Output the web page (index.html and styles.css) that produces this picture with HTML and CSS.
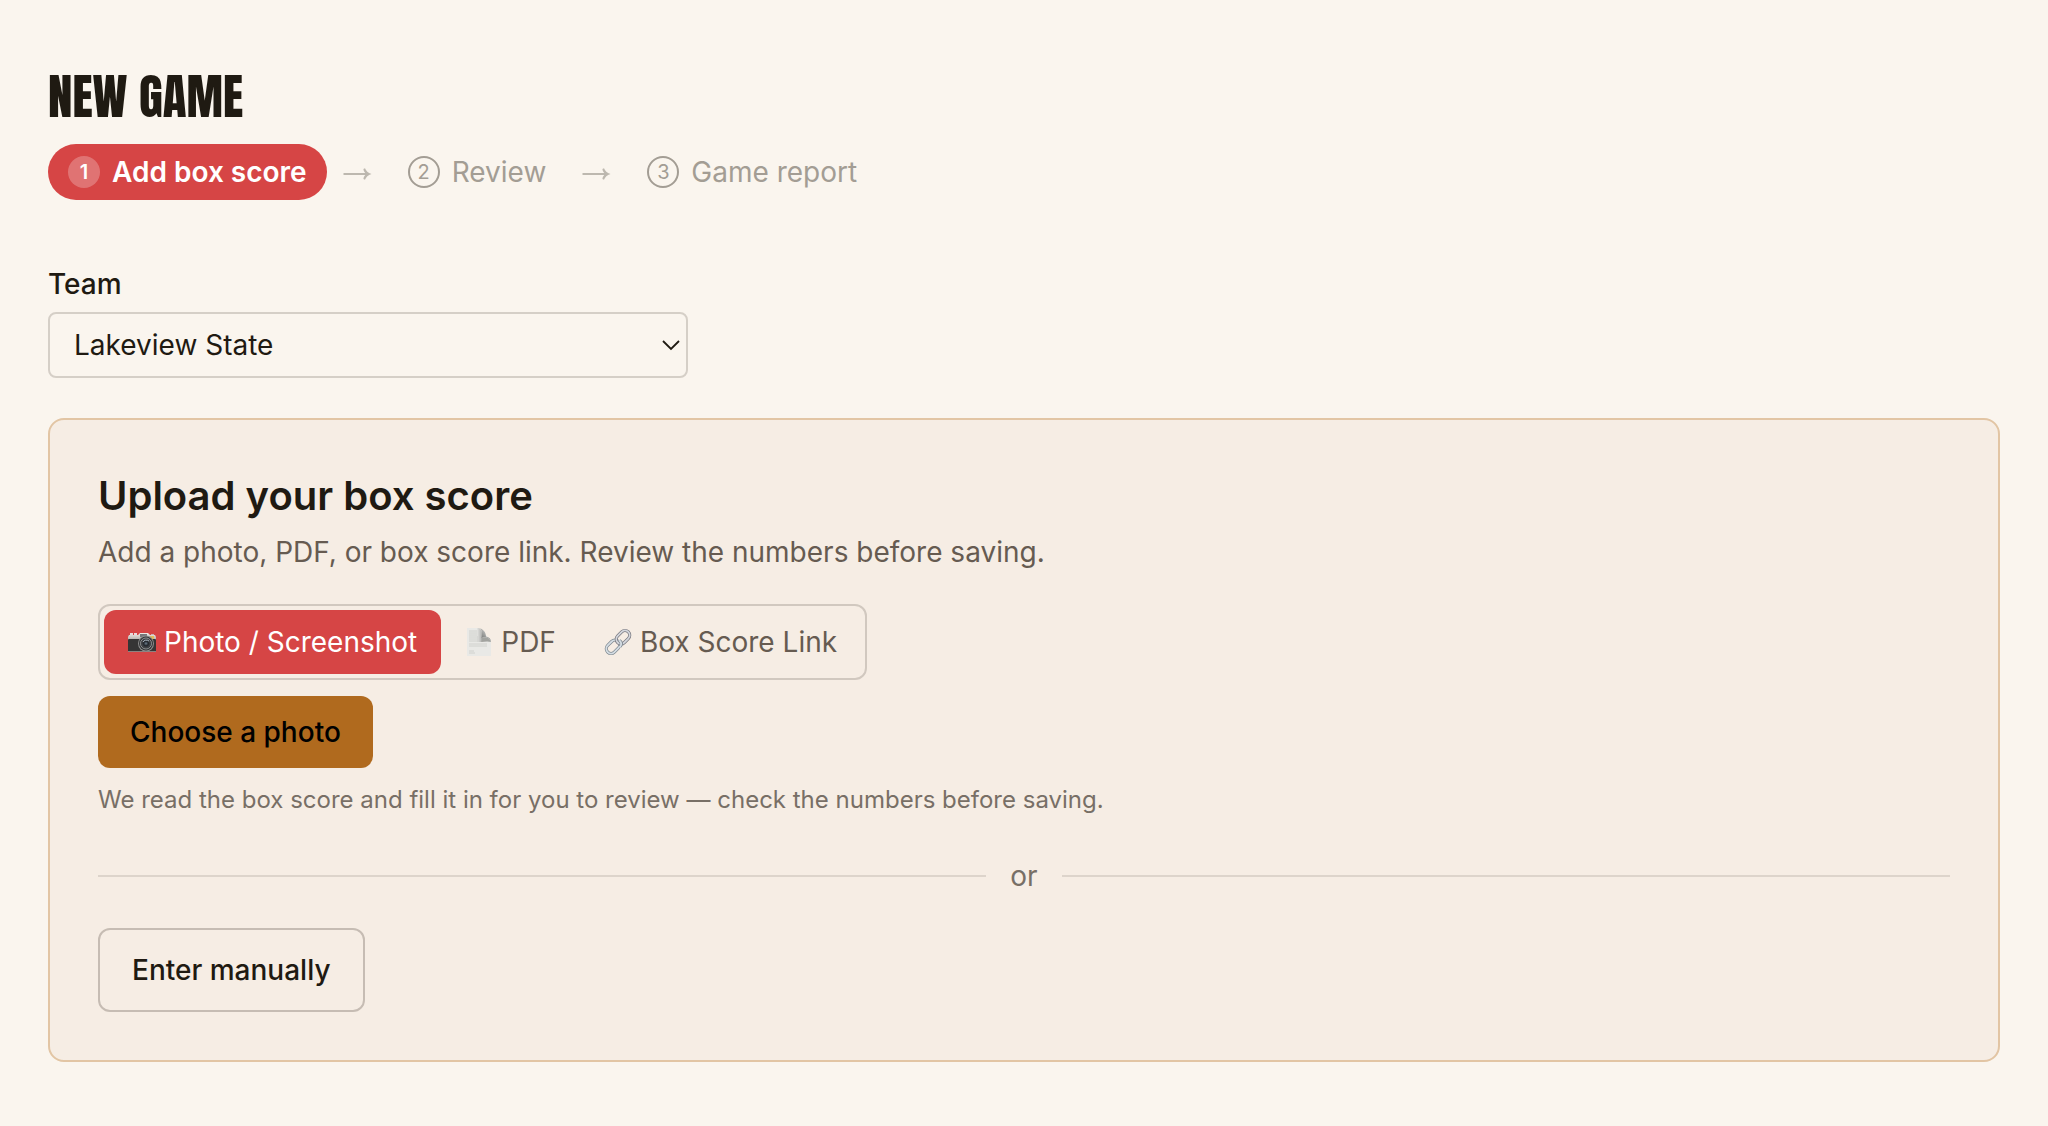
FILE: index.html
```html
<!DOCTYPE html>
<html lang="en">

<head>
  <meta charset="UTF-8">
  <meta name="viewport" content="width=device-width, initial-scale=1.0">
  <title>New Game</title>
  <link rel="stylesheet" href="styles.css">
</head>

<body>
  <main class="page">
    <h1 class="page-title">NEW GAME</h1>

    <ol class="steps">
      <li class="step step-active"><span class="step-number">1</span>Add box score</li>
      <li class="step-arrow" aria-hidden="true">
        <svg class="arrow" viewBox="0 0 28 14">
          <path d="M0 7h25" stroke="currentColor" stroke-width="2" />
          <path d="M21.500 1.200c1 2.600 3 4.800 6.500 5.800c-3.500 1-5.500 3.200-6.500 5.800l-1.600-.8c.2-2 1.200-3.800 3.200-5c-2-1.200-3-3-3.200-5z" fill="currentColor" />
        </svg>
      </li>
      <li class="step"><span class="step-number">2</span>Review</li>
      <li class="step-arrow" aria-hidden="true">
        <svg class="arrow" viewBox="0 0 28 14">
          <path d="M0 7h25" stroke="currentColor" stroke-width="2" />
          <path d="M21.500 1.200c1 2.600 3 4.800 6.500 5.800c-3.500 1-5.500 3.200-6.500 5.800l-1.600-.8c.2-2 1.200-3.800 3.200-5c-2-1.200-3-3-3.200-5z" fill="currentColor" />
        </svg>
      </li>
      <li class="step"><span class="step-number">3</span>Game report</li>
    </ol>

    <div class="field">
      <label class="field-label" for="team">Team</label>
      <div class="select-wrap">
        <select class="select" id="team">
          <option>Lakeview State</option>
        </select>
        <svg class="select-chevron" viewBox="0 0 18 12" aria-hidden="true">
          <path d="M1 2l8 8 8-8" fill="none" stroke="currentColor" stroke-width="1.8" />
        </svg>
      </div>
    </div>

    <section class="card">
      <h2 class="card-title">Upload your box score</h2>
      <p class="card-text">Add a photo, PDF, or box score link. Review the numbers before saving.</p>

      <div class="tabs">
        <button class="tab tab-active" type="button">
          <svg class="tab-icon" viewBox="0 0 28 28" aria-hidden="true">
            <defs>
              <linearGradient id="camera-top" x1="0" y1="0" x2="0" y2="1">
                <stop offset="0" stop-color="#f2efe9" />
                <stop offset="1" stop-color="#a9a6a2" />
              </linearGradient>
              <radialGradient id="camera-lens">
                <stop offset="0" stop-color="#6f8090" />
                <stop offset=".5" stop-color="#20242a" />
                <stop offset="1" stop-color="#4a4c50" />
              </radialGradient>
            </defs>
            <rect x="2" y="5" width="3" height="4" fill="#e9dcdc" />
            <rect x="6" y="5" width="3" height="4" fill="#e9dcdc" />
            <rect x="23" y="6" width="3" height="3" fill="#c9b6b4" />
            <path d="M0 9l1-2h9l2-2h8l2 2h5l1 2v4H0z" fill="url(#camera-top)" />
            <rect x="0" y="11" width="28" height="13" rx="1" fill="#353535" />
            <path d="M0 23h28v1H0z" fill="#8b8280" />
            <rect x="12" y="6" width="7" height="3" fill="#77777a" />
            <rect x="22" y="8" width="4" height="3" fill="#e2bd5b" />
            <circle cx="18" cy="15.500" r="8" fill="#8e8e8e" />
            <circle cx="18" cy="15.500" r="7" fill="#343638" />
            <circle cx="18" cy="15.500" r="5.500" fill="none" stroke="#a5a7aa" stroke-width=".8" />
            <circle cx="18" cy="15.500" r="4.500" fill="url(#camera-lens)" />
            <path d="M15 14c1-2 4-2.500 6-1" fill="none" stroke="#a8b4bf" stroke-width="1" />
          </svg>
          Photo / Screenshot
        </button>
        <button class="tab" type="button">
          <svg class="tab-icon" viewBox="0 0 28 28" aria-hidden="true">
            <defs>
              <linearGradient id="page-fold" x1="1" y1="0" x2=".3" y2="1">
                <stop offset="0" stop-color="#f1f1ee" />
                <stop offset=".5" stop-color="#a9aaa8" />
                <stop offset="1" stop-color="#686967" />
              </linearGradient>
              <linearGradient id="page-shade" x1="0" y1="0" x2="1" y2="0">
                <stop offset=".4" stop-color="#8c8c8a" stop-opacity="0" />
                <stop offset="1" stop-color="#8c8c8a" />
              </linearGradient>
            </defs>
            <path d="M2 0h12l12 12v16H2z" fill="#e9e9e6" />
            <path d="M8 0h6c2 1 3 3 3 6v8H8z" fill="url(#page-shade)" opacity=".6" />
            <path d="M14 0c3 1 3.500 5 2.500 10c4-1.500 8-.5 9.500 4c0-3-1.500-5-5-5.500C21 4 18 1 14 0z" fill="url(#page-fold)" />
            <path d="M16.500 10c4-1.500 8-.5 9.500 4c-3-1-6-.5-9.500 0z" fill="#a2a39f" />
            <path d="M4 3h8M4 5h8M4 7h8M4 9h9M4 11h9M4 13h9M4 16h18M4 18h18M4 23h5M4 25h6" stroke="#c9cac7" stroke-width=".8" />
          </svg>
          PDF
        </button>
        <button class="tab" type="button">
          <svg class="tab-icon" viewBox="0 0 28 28" aria-hidden="true">
            <g fill="none">
              <rect x="-7.500" y="-4.700" width="15" height="9.400" rx="4.700" transform="translate(9 18.800) rotate(-45)" stroke="#7e8890" stroke-width="3.200" />
              <rect x="-7.500" y="-4.700" width="15" height="9.400" rx="4.700" transform="translate(9 18.800) rotate(-45)" stroke="#d5dde3" stroke-width="1.800" />
              <rect x="-7.500" y="-4.700" width="15" height="9.400" rx="4.700" transform="translate(19 9.200) rotate(-45)" stroke="#77777e" stroke-width="3.200" />
              <rect x="-7.500" y="-4.700" width="15" height="9.400" rx="4.700" transform="translate(19 9.200) rotate(-45)" stroke="#d3d6dc" stroke-width="1.800" />
              <path d="M15.500 12.500c2 1.600 2.300 3.800.8 6" stroke="#7e8890" stroke-width="3.200" />
              <path d="M15.200 12.200c2.300 1.900 2.600 4.200.8 6.800" stroke="#d5dde3" stroke-width="1.800" />
            </g>
          </svg>
          Box Score Link
        </button>
      </div>

      <button class="btn btn-primary" type="button">Choose a photo</button>
      <p class="hint">We read the box score and fill it in for you to review — check the numbers before saving.</p>

      <div class="divider">or</div>

      <button class="btn btn-outline" type="button">Enter manually</button>
    </section>
  </main>
</body>

</html>
```

FILE: styles.css
```css
* {
  box-sizing: border-box;
}

body {
  margin: 0;
  background-color: #faf5ee;
  color: #1f1a12;
  font-family: Inter, "Liberation Sans", sans-serif;
  font-size: 28px;
  line-height: 40px;
}

.page {
  padding: 64px 48px;
}

.page-title {
  margin: 0 0 16px;
  font-family: Anton, Impact, "Liberation Sans Narrow", sans-serif;
  font-size: 49px;
  font-weight: 400;
  line-height: 64px;
}

.steps {
  display: flex;
  align-items: center;
  margin: 0;
  padding: 0;
  list-style: none;
}

.step {
  display: flex;
  align-items: center;
  gap: 12px;
  padding: 8px 20px;
  border-radius: 28px;
  color: #a39d94;
}

.step-active {
  background-color: #d64545;
  color: #ffffff;
  font-weight: 600;
}

.step-number {
  display: flex;
  align-items: center;
  justify-content: center;
  width: 32px;
  height: 32px;
  border: 2px solid currentColor;
  border-radius: 50%;
  font-size: 20px;
}

.step-active .step-number {
  border: 0;
  background-color: rgba(255, 255, 255, 0.25);
}

.step-arrow {
  display: flex;
  padding: 4px 16px 0;
  color: #bdb8af;
}

.arrow {
  width: 29px;
  height: 14px;
}

.field {
  margin-top: 64px;
}

.field-label {
  display: block;
  margin-bottom: 8px;
  font-weight: 500;
}

.select-wrap {
  position: relative;
  max-width: 640px;
}

.select {
  width: 100%;
  height: 66px;
  padding: 0 24px;
  border: 2px solid #d5cfc7;
  border-radius: 8px;
  background-color: transparent;
  color: inherit;
  font: inherit;
  appearance: none;
}

.select-chevron {
  position: absolute;
  top: 27px;
  right: 8px;
  width: 18px;
  height: 12px;
  pointer-events: none;
}

.card {
  margin-top: 40px;
  padding: 48px;
  border: 2px solid #e2c5a4;
  border-radius: 16px;
  background-color: #f6ede4;
}

.card-title {
  margin: 0 0 8px;
  font-size: 40px;
  font-weight: 600;
  line-height: 56px;
}

.card-text {
  margin: 0;
  color: #665b51;
}

.tabs {
  display: flex;
  width: fit-content;
  margin: 32px 0 16px;
  padding: 4px;
  border: 2px solid #d1c8bf;
  border-radius: 12px;
}

.tab {
  display: flex;
  align-items: center;
  gap: 8px;
  height: 64px;
  padding: 0 24px;
  border: 0;
  border-radius: 12px;
  background-color: transparent;
  color: #665b51;
  font: inherit;
}

.tab-active {
  background-color: #d64545;
  color: #ffffff;
}

.tab-icon {
  width: 28px;
  height: 28px;
}

.btn {
  display: block;
  padding: 16px 32px;
  border: 0;
  border-radius: 12px;
  font: inherit;
  font-weight: 500;
}

.btn-primary {
  background-color: #b06a1e;
  color: #000000;
}

.btn-outline {
  padding: 20px 32px;
  border: 2px solid #c6bcb3;
  background-color: transparent;
  color: #1f1a12;
}

.hint {
  margin: 16px 0 0;
  color: #786f66;
  font-size: 24px;
  line-height: 32px;
}

.divider {
  display: flex;
  align-items: center;
  gap: 24px;
  margin: 40px 0 32px;
  color: #786f66;
}

.divider::before,
.divider::after {
  content: "";
  flex: 1;
  height: 2px;
  background-color: #ddd4cb;
}
```
